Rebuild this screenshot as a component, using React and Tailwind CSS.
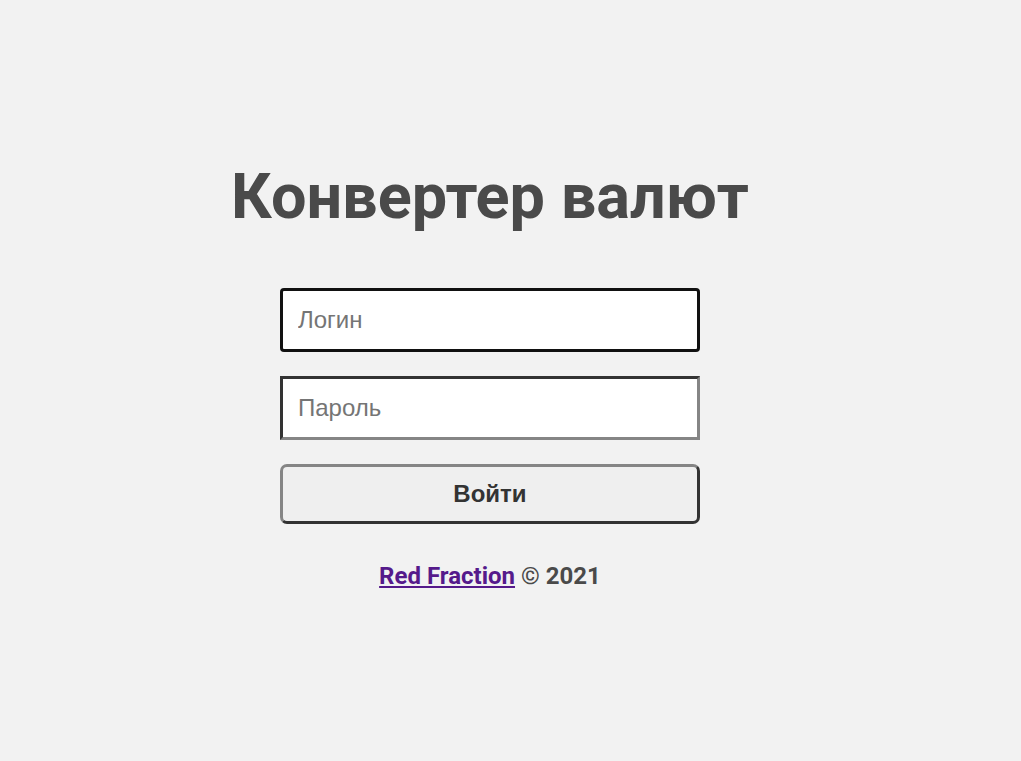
export default function App() {
  return (
    <div className="min-h-[761px] w-full bg-[#f2f2f2]">
      <div className="w-[980px] flex flex-col items-center pt-[159px]">
        <h1 className="font-['Roboto',sans-serif] font-bold text-[63px] leading-[75px] text-[#4a4a4a] m-0">
          Конвертер валют
        </h1>
        <form className="flex flex-col items-center mt-[54px] w-[420px]" onSubmit={(e) => e.preventDefault()}>
          <input
            autoFocus
            type="text"
            placeholder="Логин"
            className="w-[420px] h-[64px] bg-white border-[3px] border-[#111111] rounded-[4px] pl-[15px] font-['Liberation_Sans',Arial,sans-serif] text-[24px] text-black placeholder:text-[#757575] outline-none"
          />
          <input
            type="password"
            placeholder="Пароль"
            className="mt-[24px] w-[420px] h-[64px] bg-white border-[3px] border-t-[#333333] border-l-[#333333] border-b-[#858585] border-r-[#858585] pl-[15px] font-['Liberation_Sans',Arial,sans-serif] text-[24px] text-black placeholder:text-[#757575] outline-none"
          />
          <button
            type="submit"
            className="mt-[24px] w-[420px] h-[60px] bg-[#efefef] border-[3px] border-t-[#858585] border-l-[#858585] border-b-[#333333] border-r-[#333333] rounded-[7px] font-['Liberation_Sans',Arial,sans-serif] font-bold text-[24px] text-[#333333]"
          >
            Войти
          </button>
        </form>
        <p className="mt-[38px] font-['Roboto',sans-serif] font-bold text-[24px] leading-[28px] text-[#4a4a4a]">
          <a href="#" className="text-[#551a8b] underline">Red Fraction</a> © 2021
        </p>
      </div>
    </div>
  );
}
